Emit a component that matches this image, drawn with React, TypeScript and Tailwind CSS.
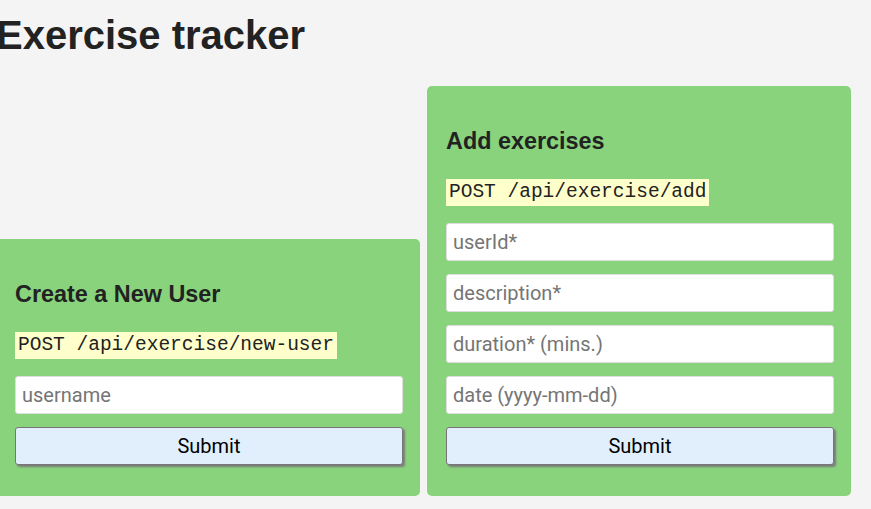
import React from 'react';

const fieldClass =
  "block w-[388px] h-[38px] px-[6px] bg-white border border-[#dedede] rounded-[3px] text-[20px] text-[#222] font-['Roboto',sans-serif] placeholder:text-[#757575] outline-none";

function SubmitButton() {
  return (
    <button
      type="submit"
      className="block w-[388px] h-[38px] bg-[#e1effd] border border-[#767676] rounded-[3px] shadow-[2px_2px_2px_#7c7c7c] text-[20px] text-black font-['Roboto',sans-serif]"
    >
      Submit
    </button>
  );
}

function Card({ title, endpoint, fields }: { title: string; endpoint: string; fields: string[] }) {
  return (
    <form
      onSubmit={(e) => e.preventDefault()}
      className="w-[424px] bg-[#88d37c] rounded-[5px] pt-[42px] pb-[31px] pl-[19px] pr-[17px]"
    >
      <h3 className="text-[23.4px] leading-[27px] font-bold text-[#222]">{title}</h3>
      <div className="mt-[24px]">
        <code className="inline-block h-[27px] px-[3px] bg-[#ffffcc] text-[19.5px] leading-[27px] text-[#222] font-['Liberation_Mono',monospace]">
          {endpoint}
        </code>
      </div>
      <div className="mt-[17px] flex flex-col gap-[13px]">
        {fields.map((f) => (
          <input key={f} type="text" placeholder={f} className={fieldClass} />
        ))}
        <SubmitButton />
      </div>
    </form>
  );
}

export default function App() {
  return (
    <div className="min-h-screen bg-[#f4f4f4] overflow-hidden font-['Liberation_Sans',Arial,sans-serif] text-[#222]">
      <div className="-ml-[4px]">
        <h1 className="pt-[12px] text-[40px] leading-[46px] font-bold">Exercise tracker</h1>
        <div className="mt-[28px] flex items-end gap-[7px]">
          <Card title="Create a New User" endpoint="POST /api/exercise/new-user" fields={['username']} />
          <Card
            title="Add exercises"
            endpoint="POST /api/exercise/add"
            fields={['userId*', 'description*', 'duration* (mins.)', 'date (yyyy-mm-dd)']}
          />
        </div>
      </div>
    </div>
  );
}
